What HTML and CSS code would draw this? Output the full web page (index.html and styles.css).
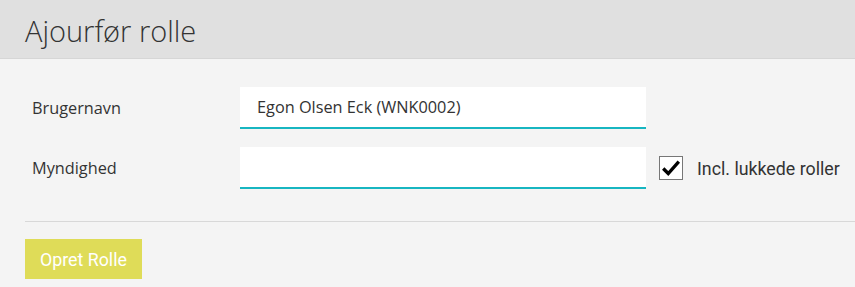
FILE: index.html
```html
<!DOCTYPE html>
<html lang="da">
<head>
<meta charset="utf-8">
<title>Ajourfør rolle</title>
<link rel="stylesheet" href="styles.css">
</head>
<body>
<header class="page-header">
  <h1 class="page-title">Ajourfør rolle</h1>
</header>
<main class="form">
  <div class="form-row">
    <label class="form-label">Brugernavn</label>
    <div class="field">Egon Olsen Eck (WNK0002)</div>
  </div>
  <div class="form-row">
    <label class="form-label">Myndighed</label>
    <div class="field"></div>
    <div class="check">
      <span class="check-box">
        <svg viewBox="0 0 24 24" width="22" height="22"><path d="M3.5 12.5 L9 18 L20.5 5" fill="none" stroke="#000" stroke-width="3.6" stroke-linecap="butt" stroke-linejoin="miter"/></svg>
      </span>
      <span class="check-label">Incl. lukkede roller</span>
    </div>
  </div>
  <hr class="divider">
  <button class="btn" type="button">Opret Rolle</button>
</main>
</body>
</html>
```
FILE: styles.css
```css
html, body {
  margin: 0;
  padding: 0;
  background: #f4f4f4;
  height: 287px;
  overflow: hidden;
}
body {
  font-family: "Open Sans", "Liberation Sans", sans-serif;
  color: #333;
}
.page-header {
  height: 58px;
  background: #e0e0e0;
  border-bottom: 1px solid #d6d6d6;
  display: flex;
  align-items: center;
  padding-left: 25px;
}
.page-title {
  margin: 0;
  font-weight: 300;
  font-size: 29px;
  color: #333;
  line-height: 1;
  padding-top: 3px;
}
.form {
  padding: 28px 0 0 25px;
  display: flex;
  flex-direction: column;
}
.form-row {
  display: flex;
  align-items: center;
  margin-bottom: 18px;
}
.form-label {
  width: 215px;
  padding-left: 7px;
  box-sizing: border-box;
  font-size: 16.3px;
  color: #333;
}
.field {
  height: 40px;
  background: #fff;
  border-bottom: 2px solid #17b6c1;
  font-size: 16.3px;
  line-height: 40px;
  padding-left: 17px;
  width: 389px;
  color: #333;
}
.check {
  display: flex;
  align-items: center;
  margin-left: 13px;
}
.check-box {
  width: 22px;
  height: 22px;
  border: 1px solid #777;
  background: #fff;
  display: flex;
  align-items: center;
  justify-content: center;
}
.check-label {
  margin-left: 14px;
  font-family: Roboto, "Liberation Sans", sans-serif;
  font-size: 17.8px;
  color: #333;
}
.divider {
  margin: 14px 0 0 0;
  border: 0;
  border-top: 1px solid #d8d8d8;
  height: 0;
}
.btn {
  align-self: flex-start;
  margin-top: 17px;
  height: 40px;
  padding: 0 15px;
  background: #dfdc58;
  border: 0;
  color: #fff;
  font-family: Roboto, "Liberation Sans", sans-serif;
  font-size: 17.8px;
  cursor: pointer;
}
```
